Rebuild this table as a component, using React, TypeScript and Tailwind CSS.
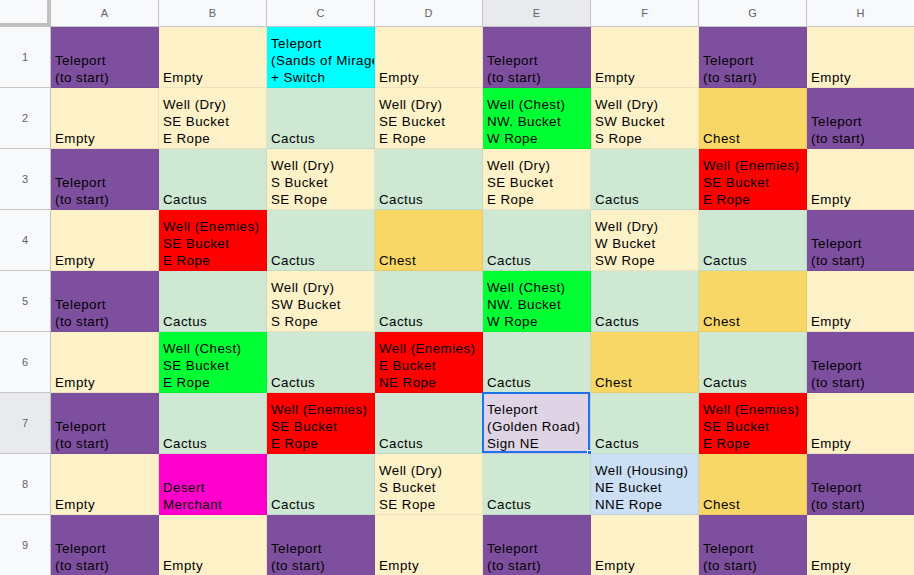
const C = {
  tp: "bg-[#7f4f9f]",
  em: "bg-[#fdf1c8]",
  ca: "bg-[#cee8d4]",
  ch: "bg-[#f9d766]",
  gr: "bg-[#00ff33]",
  rd: "bg-[#ff0000]",
  cy: "bg-[#00ffff]",
  mg: "bg-[#ff00cc]",
  bl: "bg-[#cbdff5]",
  sel: "bg-[#dfd4e6]",
};

type Cell = { bg: string; lines: string[]; selected?: boolean };

const tp = (): Cell => ({ bg: C.tp, lines: ["Teleport", "(to start)"] });
const em = (): Cell => ({ bg: C.em, lines: ["Empty"] });
const ca = (): Cell => ({ bg: C.ca, lines: ["Cactus"] });
const ch = (): Cell => ({ bg: C.ch, lines: ["Chest"] });
const dry = (b: string, r: string): Cell => ({ bg: C.em, lines: ["Well (Dry)", b, r] });
const enemies = (b: string, r: string): Cell => ({ bg: C.rd, lines: ["Well (Enemies)", b, r] });
const chestWell = (b: string, r: string): Cell => ({ bg: C.gr, lines: ["Well (Chest)", b, r] });

const rows: Cell[][] = [
  [tp(), em(), { bg: C.cy, lines: ["Teleport", "(Sands of Mirage)", "+ Switch"] }, em(), tp(), em(), tp(), em()],
  [em(), dry("SE Bucket", "E Rope"), ca(), dry("SE Bucket", "E Rope"), chestWell("NW. Bucket", "W Rope"), dry("SW Bucket", "S Rope"), ch(), tp()],
  [tp(), ca(), dry("S Bucket", "SE Rope"), ca(), dry("SE Bucket", "E Rope"), ca(), enemies("SE Bucket", "E Rope"), em()],
  [em(), enemies("SE Bucket", "E Rope"), ca(), ch(), ca(), dry("W Bucket", "SW Rope"), ca(), tp()],
  [tp(), ca(), dry("SW Bucket", "S Rope"), ca(), chestWell("NW. Bucket", "W Rope"), ca(), ch(), em()],
  [em(), chestWell("SE Bucket", "E Rope"), ca(), enemies("E Bucket", "NE Rope"), ca(), ch(), ca(), tp()],
  [tp(), ca(), enemies("SE Bucket", "E Rope"), ca(), { bg: C.sel, lines: ["Teleport", "(Golden Road)", "Sign NE"], selected: true }, ca(), enemies("SE Bucket", "E Rope"), em()],
  [em(), { bg: C.mg, lines: ["Desert", "Merchant"] }, ca(), dry("S Bucket", "SE Rope"), ca(), { bg: C.bl, lines: ["Well (Housing)", "NE Bucket", "NNE Rope"] }, ch(), tp()],
  [tp(), em(), tp(), em(), tp(), em(), tp(), em()],
];

const cols = ["A", "B", "C", "D", "E", "F", "G", "H"];

export default function App() {
  return (
    <div className="w-[914px] h-[575px] overflow-hidden bg-white font-['Liberation_Sans',Arial,sans-serif]">
      <div className="grid grid-cols-[51px_repeat(8,108px)] grid-rows-[27px_repeat(9,61px)]">
        <div className="bg-[#f8f9fa] border-r-4 border-b-4 border-[#c0c0c0]" />
        {cols.map((c) => (
          <div
            key={c}
            className={`flex items-center justify-center border-r border-b border-[#c4c4c4] text-[11px] text-[#5f6368] ${
              c === "E" ? "bg-[#e8eaed]" : "bg-[#f8f9fa]"
            }`}
          >
            {c}
          </div>
        ))}
        {rows.map((row, ri) => (
          <Row key={ri} index={ri + 1} cells={row} />
        ))}
      </div>
    </div>
  );
}

function Row({ index, cells }: { index: number; cells: Cell[] }) {
  return (
    <>
      <div
        className={`flex items-center justify-center border-r border-b border-[#c4c4c4] text-[11px] text-[#5f6368] ${
          index === 7 ? "bg-[#e8eaed]" : "bg-[#f8f9fa]"
        }`}
      >
        {index}
      </div>
      {cells.map((cell, i) => (
        <div
          key={i}
          className={`relative flex flex-col justify-end pl-[4px] pb-[1px] border-r border-b border-black/[0.06] text-[13.33px] tracking-[0.45px] leading-[17px] text-black whitespace-nowrap ${cell.bg}`}
        >
          <div className="overflow-hidden">
            {cell.lines.map((l, j) => (
              <div key={j}>{l}</div>
            ))}
          </div>
          {cell.selected && (
            <>
              <div className="absolute -left-px -top-px right-0 bottom-0 border-2 border-[#1a73e8] pointer-events-none" />
              <div className="absolute -right-[5px] -bottom-[5px] w-[8px] h-[8px] bg-[#1a73e8] border border-white" />
            </>
          )}
        </div>
      ))}
    </>
  );
}
